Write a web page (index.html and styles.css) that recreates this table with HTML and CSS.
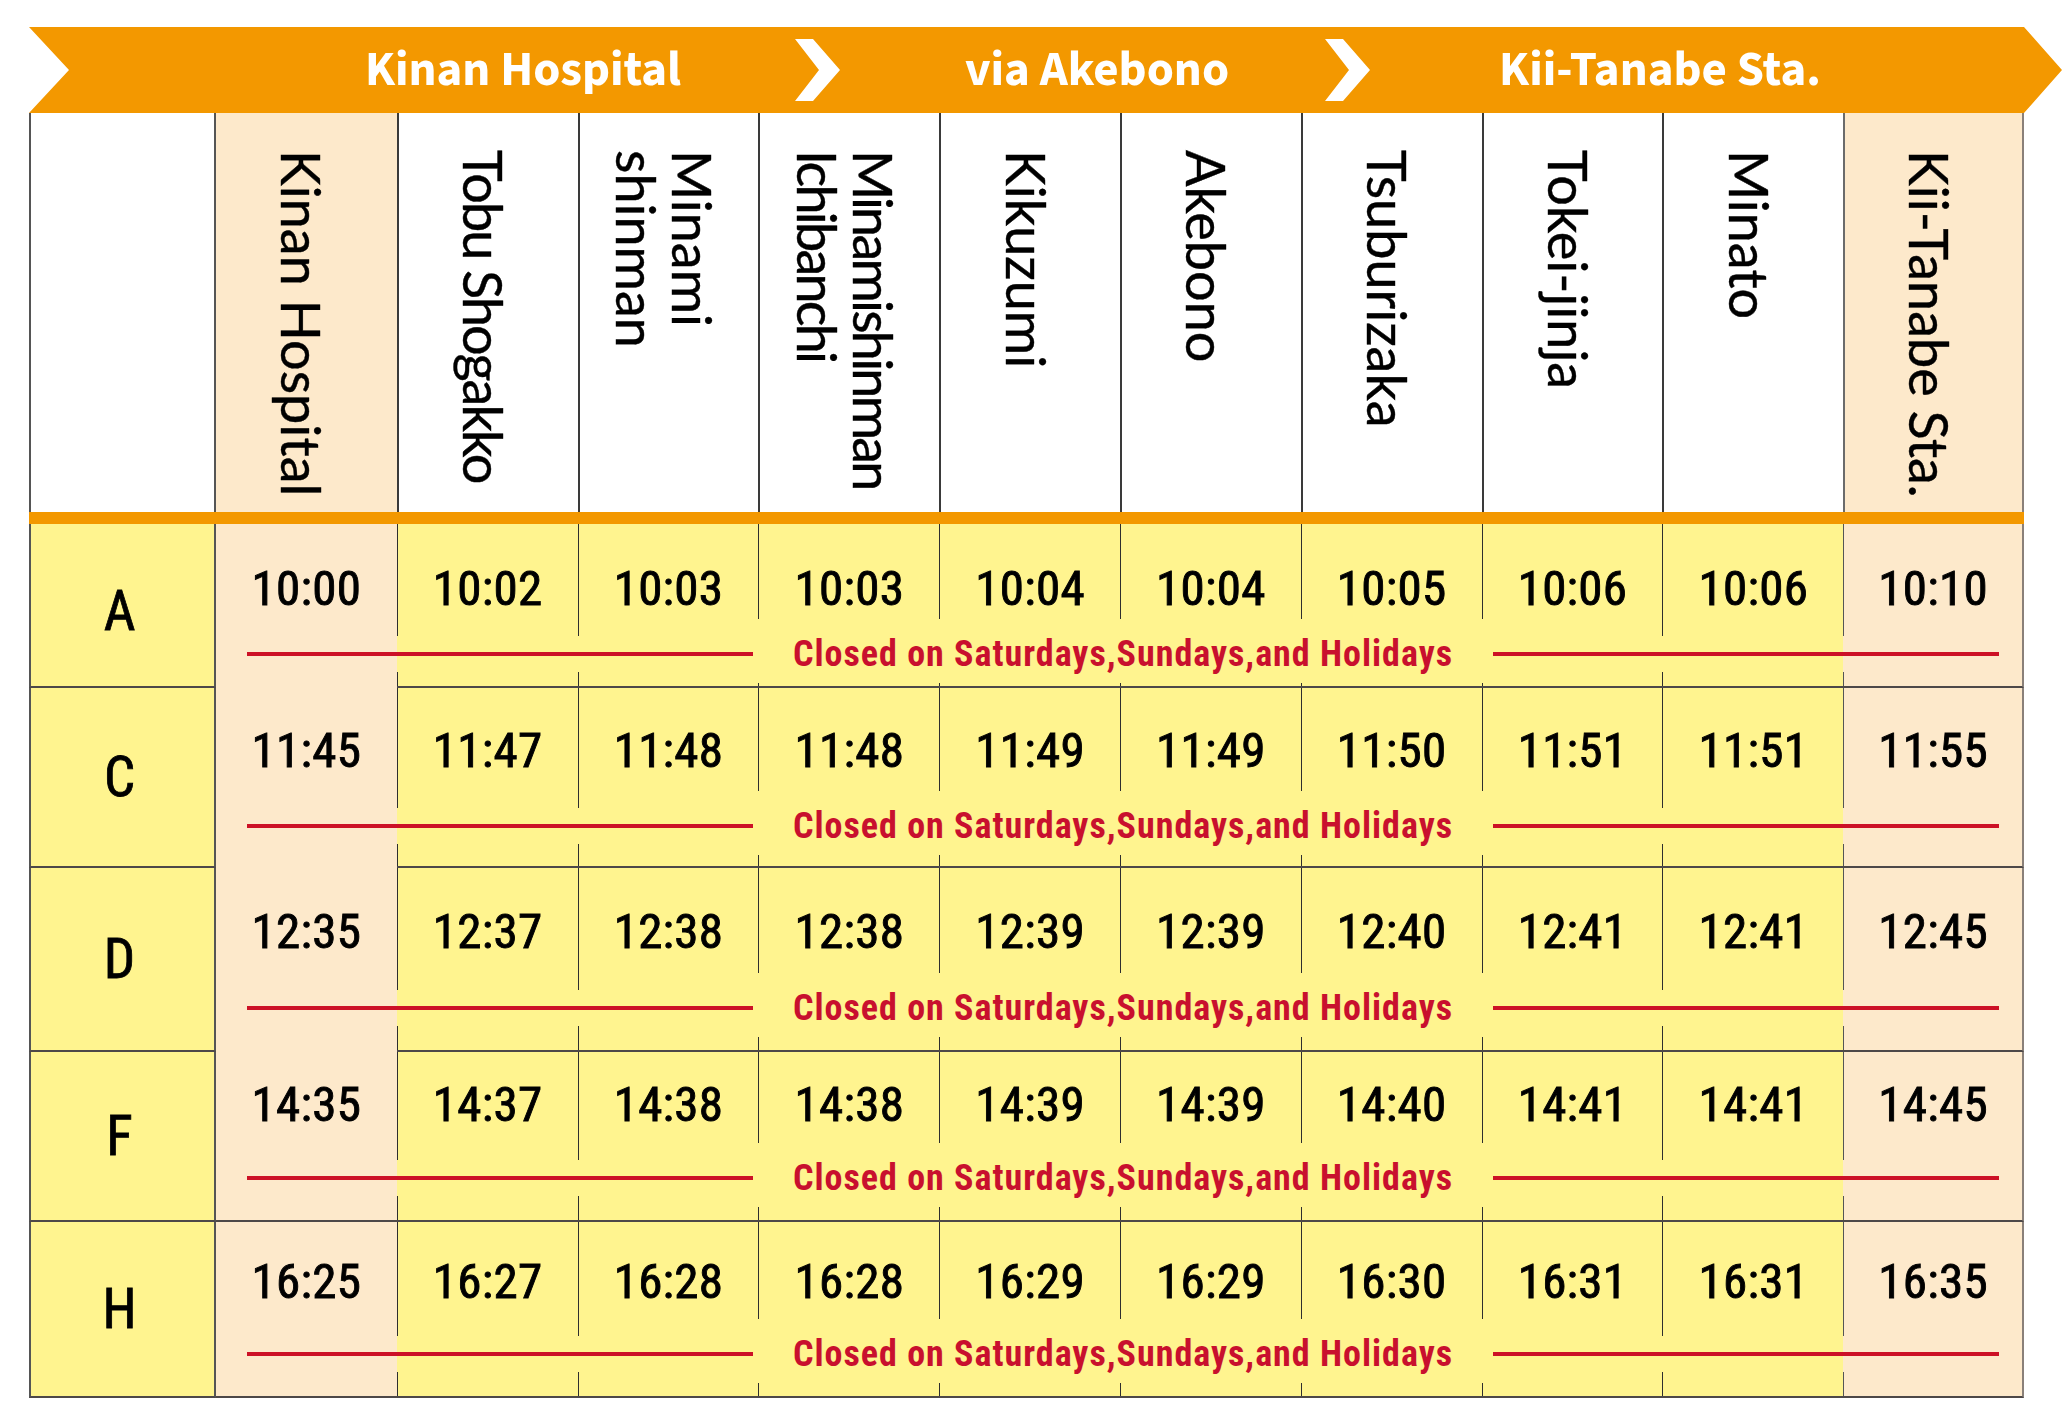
FILE: index.html
```html
<!DOCTYPE html>
<html lang="en">
<head>
<meta charset="utf-8">
<title>Timetable</title>
<link rel="stylesheet" href="styles.css">
</head>
<body>
<div class="sheet">
  <div class="banner">
    <span class="bt bt-1">Kinan Hospital</span>
    <svg class="chev chev-1" viewBox="0 0 45 62" width="45" height="62"><polygon points="0,0 18,0 45,31 18,62 0,62 24,31" fill="#fff"/></svg>
    <span class="bt bt-2">via Akebono</span>
    <svg class="chev chev-2" viewBox="0 0 45 62" width="45" height="62"><polygon points="0,0 18,0 45,31 18,62 0,62 24,31" fill="#fff"/></svg>
    <span class="bt bt-3">Kii-Tanabe Sta.</span>
  </div>

  <div class="table">
    <div class="head">
      <div class="hcell hlabel"></div>
      <div class="hcell first"><div class="name">Kinan Hospital</div></div>
      <div class="hcell"><div class="name tight-2">Tobu Shogakko</div></div>
      <div class="hcell"><div class="name">Minami<br>shinman</div></div>
      <div class="hcell"><div class="name tight-3">Minamishinman<br>Ichibanchi</div></div>
      <div class="hcell"><div class="name">Kikuzumi</div></div>
      <div class="hcell"><div class="name">Akebono</div></div>
      <div class="hcell"><div class="name">Tsuburizaka</div></div>
      <div class="hcell"><div class="name">Tokei-jinja</div></div>
      <div class="hcell"><div class="name">Minato</div></div>
      <div class="hcell last"><div class="name">Kii-Tanabe Sta.</div></div>
    </div>
    <div class="obar"></div>

    <div class="row row-a">
      <div class="label">A</div>
      <div class="cell first nb"><div class="top"><span class="time">10:00</span></div><div class="gap"></div><div class="stub"></div></div>
      <div class="cell"><div class="top"><span class="time">10:02</span></div><div class="gap"></div><div class="stub"></div></div>
      <div class="cell"><div class="top"><span class="time">10:03</span></div><div class="gap"></div><div class="stub"></div></div>
      <div class="cell tg"><div class="top"><span class="time">10:03</span></div><div class="gap"></div><div class="stub"></div></div>
      <div class="cell tg"><div class="top"><span class="time">10:04</span></div><div class="gap"></div><div class="stub"></div></div>
      <div class="cell tg"><div class="top"><span class="time">10:04</span></div><div class="gap"></div><div class="stub"></div></div>
      <div class="cell tg"><div class="top"><span class="time">10:05</span></div><div class="gap"></div><div class="stub"></div></div>
      <div class="cell tg"><div class="top"><span class="time">10:06</span></div><div class="gap"></div><div class="stub"></div></div>
      <div class="cell"><div class="top"><span class="time">10:06</span></div><div class="gap"></div><div class="stub"></div></div>
      <div class="cell last"><div class="top"><span class="time">10:10</span></div><div class="gap"></div><div class="stub"></div></div>
      <div class="closed"><span class="rl"></span><span class="ct">Closed on Saturdays,Sundays,and Holidays</span><span class="rl"></span></div>
    </div>

    <div class="row row-c">
      <div class="label">C</div>
      <div class="cell first nb"><div class="top"><span class="time">11:45</span></div><div class="gap"></div><div class="stub"></div></div>
      <div class="cell"><div class="top"><span class="time">11:47</span></div><div class="gap"></div><div class="stub"></div></div>
      <div class="cell"><div class="top"><span class="time">11:48</span></div><div class="gap"></div><div class="stub"></div></div>
      <div class="cell tg"><div class="top"><span class="time">11:48</span></div><div class="gap"></div><div class="stub"></div></div>
      <div class="cell tg"><div class="top"><span class="time">11:49</span></div><div class="gap"></div><div class="stub"></div></div>
      <div class="cell tg"><div class="top"><span class="time">11:49</span></div><div class="gap"></div><div class="stub"></div></div>
      <div class="cell tg"><div class="top"><span class="time">11:50</span></div><div class="gap"></div><div class="stub"></div></div>
      <div class="cell tg"><div class="top"><span class="time">11:51</span></div><div class="gap"></div><div class="stub"></div></div>
      <div class="cell"><div class="top"><span class="time">11:51</span></div><div class="gap"></div><div class="stub"></div></div>
      <div class="cell last"><div class="top"><span class="time">11:55</span></div><div class="gap"></div><div class="stub"></div></div>
      <div class="closed"><span class="rl"></span><span class="ct">Closed on Saturdays,Sundays,and Holidays</span><span class="rl"></span></div>
    </div>

    <div class="row row-d">
      <div class="label">D</div>
      <div class="cell first nb"><div class="top"><span class="time">12:35</span></div><div class="gap"></div><div class="stub"></div></div>
      <div class="cell"><div class="top"><span class="time">12:37</span></div><div class="gap"></div><div class="stub"></div></div>
      <div class="cell"><div class="top"><span class="time">12:38</span></div><div class="gap"></div><div class="stub"></div></div>
      <div class="cell tg"><div class="top"><span class="time">12:38</span></div><div class="gap"></div><div class="stub"></div></div>
      <div class="cell tg"><div class="top"><span class="time">12:39</span></div><div class="gap"></div><div class="stub"></div></div>
      <div class="cell tg"><div class="top"><span class="time">12:39</span></div><div class="gap"></div><div class="stub"></div></div>
      <div class="cell tg"><div class="top"><span class="time">12:40</span></div><div class="gap"></div><div class="stub"></div></div>
      <div class="cell tg"><div class="top"><span class="time">12:41</span></div><div class="gap"></div><div class="stub"></div></div>
      <div class="cell"><div class="top"><span class="time">12:41</span></div><div class="gap"></div><div class="stub"></div></div>
      <div class="cell last"><div class="top"><span class="time">12:45</span></div><div class="gap"></div><div class="stub"></div></div>
      <div class="closed"><span class="rl"></span><span class="ct">Closed on Saturdays,Sundays,and Holidays</span><span class="rl"></span></div>
    </div>

    <div class="row row-f">
      <div class="label">F</div>
      <div class="cell first"><div class="top"><span class="time">14:35</span></div><div class="gap"></div><div class="stub"></div></div>
      <div class="cell"><div class="top"><span class="time">14:37</span></div><div class="gap"></div><div class="stub"></div></div>
      <div class="cell"><div class="top"><span class="time">14:38</span></div><div class="gap"></div><div class="stub"></div></div>
      <div class="cell tg"><div class="top"><span class="time">14:38</span></div><div class="gap"></div><div class="stub"></div></div>
      <div class="cell tg"><div class="top"><span class="time">14:39</span></div><div class="gap"></div><div class="stub"></div></div>
      <div class="cell tg"><div class="top"><span class="time">14:39</span></div><div class="gap"></div><div class="stub"></div></div>
      <div class="cell tg"><div class="top"><span class="time">14:40</span></div><div class="gap"></div><div class="stub"></div></div>
      <div class="cell tg"><div class="top"><span class="time">14:41</span></div><div class="gap"></div><div class="stub"></div></div>
      <div class="cell"><div class="top"><span class="time">14:41</span></div><div class="gap"></div><div class="stub"></div></div>
      <div class="cell last"><div class="top"><span class="time">14:45</span></div><div class="gap"></div><div class="stub"></div></div>
      <div class="closed"><span class="rl"></span><span class="ct">Closed on Saturdays,Sundays,and Holidays</span><span class="rl"></span></div>
    </div>

    <div class="row row-h">
      <div class="label">H</div>
      <div class="cell first"><div class="top"><span class="time">16:25</span></div><div class="gap"></div><div class="stub"></div></div>
      <div class="cell"><div class="top"><span class="time">16:27</span></div><div class="gap"></div><div class="stub"></div></div>
      <div class="cell"><div class="top"><span class="time">16:28</span></div><div class="gap"></div><div class="stub"></div></div>
      <div class="cell tg"><div class="top"><span class="time">16:28</span></div><div class="gap"></div><div class="stub"></div></div>
      <div class="cell tg"><div class="top"><span class="time">16:29</span></div><div class="gap"></div><div class="stub"></div></div>
      <div class="cell tg"><div class="top"><span class="time">16:29</span></div><div class="gap"></div><div class="stub"></div></div>
      <div class="cell tg"><div class="top"><span class="time">16:30</span></div><div class="gap"></div><div class="stub"></div></div>
      <div class="cell tg"><div class="top"><span class="time">16:31</span></div><div class="gap"></div><div class="stub"></div></div>
      <div class="cell"><div class="top"><span class="time">16:31</span></div><div class="gap"></div><div class="stub"></div></div>
      <div class="cell last"><div class="top"><span class="time">16:35</span></div><div class="gap"></div><div class="stub"></div></div>
      <div class="closed"><span class="rl"></span><span class="ct">Closed on Saturdays,Sundays,and Holidays</span><span class="rl"></span></div>
    </div>
  </div>
</div>
</body>
</html>
```
FILE: styles.css
```css
* { box-sizing: border-box; }
html, body { margin: 0; padding: 0; background: #fff; }
body { font-family: "Liberation Sans", Arial, sans-serif; color: #000; }

.sheet { padding: 27px 0 0 29px; width: 2066px; }

/* ---------- banner ---------- */
.banner {
  width: 2033px;
  height: 86px;
  background: #f39800;
  clip-path: polygon(0 0, calc(100% - 38px) 0, 100% 50%, calc(100% - 38px) 100%, 0 100%, 40px 50%);
  display: flex;
  align-items: center;
  padding-left: 294px;
  color: #fff;
  font-family: "Source Sans 3", "Noto Sans CJK JP", sans-serif;
  font-weight: 700;
  font-size: 49px;
  line-height: 1;
}
.bt { display: block; text-align: center; white-space: nowrap; }
.bt-1 { width: 400px; }
.chev-1 { margin-left: 72px; flex: none; }
.bt-2 { width: 400px; margin-left: 57px; }
.chev-2 { margin-left: 28px; flex: none; }
.bt-3 { width: 500px; margin-left: 40px; }

/* ---------- table ---------- */
.table { width: 1995px; }
.head, .row {
  display: grid;
  grid-template-columns: 187px repeat(10, 1fr);
}
.head { height: 399px; }

.hcell {
  background: #fff;
  border-left: 2px solid #3a3a3a;
  display: flex;
  justify-content: center;
  align-items: flex-start;
  padding-top: 37px;
}
.hcell.hlabel { border-left: 2px solid #555; border-right: 2px solid #555; }
.hcell.first { border-left: 0; background: #fde9cb; }
.hcell.last { background: #fde9cb; border-right: 2px solid #8a8079; border-left-color: #6b6b6b; }
.name {
  writing-mode: vertical-rl;
  font-family: Lato, "Noto Sans", sans-serif;
  font-size: 54px;
  line-height: 56px;
  white-space: nowrap;
  margin-right: 10px;
  -webkit-text-stroke: 0.4px #000;
}
.name.tight-2 { letter-spacing: -2px; }
.name.tight-3 { letter-spacing: -2.8px; }

.obar { height: 12px; background: #f39800; }

/* ---------- rows ---------- */
.row { --lb: 44px; --tp: 38px; }
.row-a { height: 164px; --lb: 34px; --tp: 40px; }
.row-c { height: 180px; --lb: 42px; --tp: 38px; }
.row-d { height: 184px; --lb: 44px; --tp: 39px; }
.row-f { height: 170px; --lb: 44px; --tp: 28px; }
.row-h { height: 176px; --lb: 44px; --tp: 35px; }

.label {
  grid-column: 1;
  grid-row: 1;
  background: #fff48f;
  border-left: 2px solid #555;
  border-right: 2px solid #555;
  border-bottom: 2px solid #4d4848;
  display: flex;
  align-items: center;
  justify-content: center;
  padding-right: 6px;
  font-family: "Roboto Condensed", Roboto, sans-serif;
  font-size: 55px;
  line-height: 1;
  -webkit-text-stroke: 0.8px #000;
}
.row-a .label { padding-top: 12px; }

.cell {
  grid-row: 1;
  background: #fff48f;
  border-bottom: 2px solid #4d4848;
  display: flex;
  flex-direction: column;
  --g: 36px;
  --s: calc(var(--lb) - 20px);
}
.row > .cell:nth-child(2) { grid-column: 2; }
.row > .cell:nth-child(3) { grid-column: 3; }
.row > .cell:nth-child(4) { grid-column: 4; }
.row > .cell:nth-child(5) { grid-column: 5; }
.row > .cell:nth-child(6) { grid-column: 6; }
.row > .cell:nth-child(7) { grid-column: 7; }
.row > .cell:nth-child(8) { grid-column: 8; }
.row > .cell:nth-child(9) { grid-column: 9; }
.row > .cell:nth-child(10) { grid-column: 10; }
.row > .cell:nth-child(11) { grid-column: 11; }

.cell.tg { --g: 64px; --s: calc(var(--lb) - 31px); }
.cell.first { background: #fde9cb; }
.cell.nb { border-bottom-color: transparent; }
.cell.last { background: #fde9cb; border-right: 2px solid #8a8079; }

.top {
  flex: 1;
  border-left: 1.5px solid #2e2e2e;
  display: flex;
  justify-content: center;
  padding-top: var(--tp);
}
.gap { height: var(--g); }
.stub { height: var(--s); border-left: 1.5px solid #2e2e2e; }
.cell.first .top, .cell.first .stub { border-left: 0; }
.cell.last .top, .cell.last .stub { border-left-color: #555; }

.time {
  font-family: "Roboto Condensed", Roboto, sans-serif;
  font-size: 49px;
  line-height: 1;
  letter-spacing: 0.3px;
  -webkit-text-stroke: 0.9px #000;
}

.closed {
  grid-column: 2 / -1;
  grid-row: 1;
  align-self: end;
  height: 40px;
  margin-bottom: calc(var(--lb) - 20px);
  display: flex;
  align-items: center;
  padding: 0 25px 0 31px;
}
.rl { flex: 1; height: 4px; background: #cc1126; }
.ct {
  padding: 0 40px;
  color: #c8102e;
  font-family: "Roboto Condensed", "Liberation Sans", sans-serif;
  font-weight: 700;
  font-size: 36px;
  letter-spacing: 1px;
  line-height: 40px;
  white-space: nowrap;
}
```
